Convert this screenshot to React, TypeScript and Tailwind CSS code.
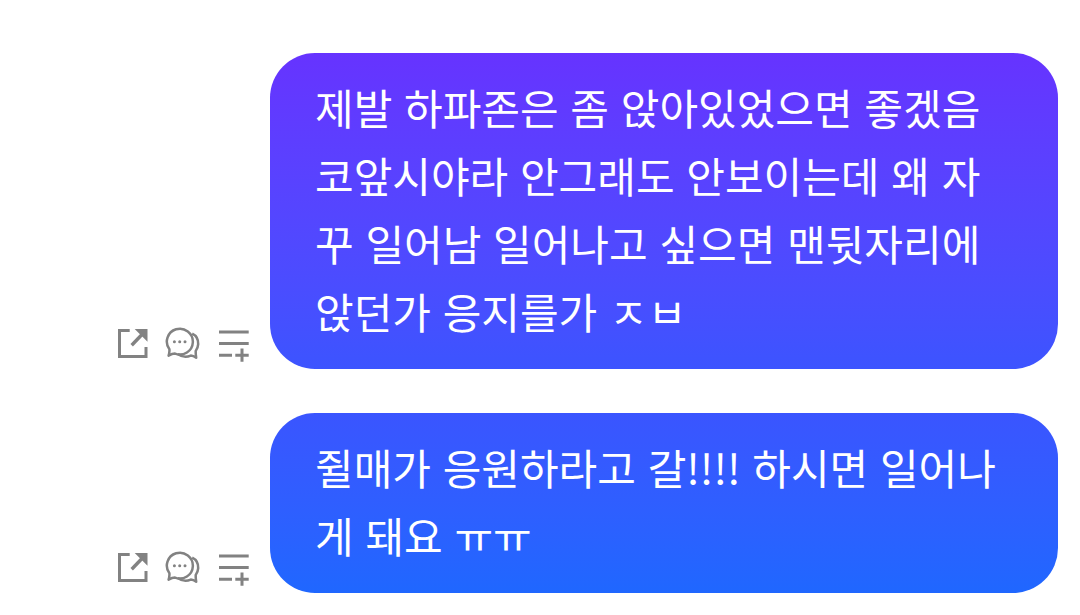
import clsx from "clsx";

type Message = {
    id: number;
    text: string;
    tone: string;
};

const messages: Message[] = [
    {
        id: 1,
        text: "제발 하파존은 좀 앉아있었으면 좋겠음 코앞시야라 안그래도 안보이는데 왜 자꾸 일어남 일어나고 싶으면 맨뒷자리에 앉던가 응지를가 ㅈㅂ",
        tone: "from-[#6633ff] to-[#3c54ff]",
    },
    {
        id: 2,
        text: "쥘매가 응원하라고 갈!!!! 하시면 일어나게 돼요 ㅠㅠ",
        tone: "from-[#3a55ff] to-[#1f67ff]",
    },
];

/*
|--------------------------------------------------------------------------
| Icons
|--------------------------------------------------------------------------
*/
function ShareIcon() {
    return (
        <svg viewBox="0 0 36 36" className="size-9" fill="none" stroke="currentColor" strokeWidth="3" aria-hidden="true">
            <path d="M14.7 3.5H4.5V29.5H31V20"/>
            <path d="M16.7 18.2L27 7.5" strokeWidth="3.4"/>
            <path d="M19.7 2H32.5V14.7Z" fill="currentColor" stroke="none"/>
        </svg>
    );
}

function ReplyIcon() {
    return (
        <svg viewBox="0 0 36 36" className="size-9" fill="none" stroke="currentColor" strokeWidth="2.5"
             strokeLinejoin="round" aria-hidden="true">
            <path d="M4.4 22.3A13 12.9 0 1 1 10 26.6C7.8 26.6 5.8 27.4 3.6 28.6C4.3 26.4 4.6 24.4 4.4 22.3Z"/>
            <path d="M27.2 6.6C31.4 8.6 33.4 12.6 33.2 17.2C33 20 32.2 22.2 30.7 24C30.6 26.3 30.8 28.4 31.2 30.8C29.4 29.6 27.6 28.8 25.8 28.6C21.6 30.5 17.2 30.3 12.8 27"/>
            <g fill="currentColor" stroke="none">
                <circle cx="9.4" cy="14.7" r="1.5"/>
                <circle cx="14.7" cy="14.7" r="1.5"/>
                <circle cx="20" cy="14.7" r="1.5"/>
            </g>
        </svg>
    );
}

function AddToListIcon() {
    return (
        <svg viewBox="0 0 36 36" className="size-9" fill="none" stroke="currentColor" strokeWidth="3" aria-hidden="true">
            <path d="M4 5H33.7M4 16.5H33.7M4 28.2H17M20.3 28.2H33.7M27 21.5V34.8"/>
        </svg>
    );
}

function MessageRow({message}: { message: Message }) {
    return (
        <li className="flex items-end gap-[19px]">
            <div className="mb-1.5 flex shrink-0 gap-3.5 text-[#828282]">
                <button type="button" aria-label="공유" className="cursor-pointer">
                    <ShareIcon/>
                </button>
                <button type="button" aria-label="답장" className="cursor-pointer">
                    <ReplyIcon/>
                </button>
                <button type="button" aria-label="목록에 추가" className="cursor-pointer">
                    <AddToListIcon/>
                </button>
            </div>

            <p className={clsx(
                "min-w-0 flex-1 rounded-[45px] bg-linear-to-b px-[45px] pt-5 pb-6 text-[42px] leading-[68px] text-white",
                message.tone
            )}>
                {message.text}
            </p>
        </li>
    );
}

export default function App() {
    return (
        <main lang="ko" className="min-h-screen bg-white font-['Noto_Sans_CJK_KR',sans-serif]">
            <ul className="flex flex-col gap-11 pt-[53px] pr-[22px] pb-[22px] pl-[115px]">
                {messages.map((message) => (
                    <MessageRow key={message.id} message={message}/>
                ))}
            </ul>
        </main>
    );
}
